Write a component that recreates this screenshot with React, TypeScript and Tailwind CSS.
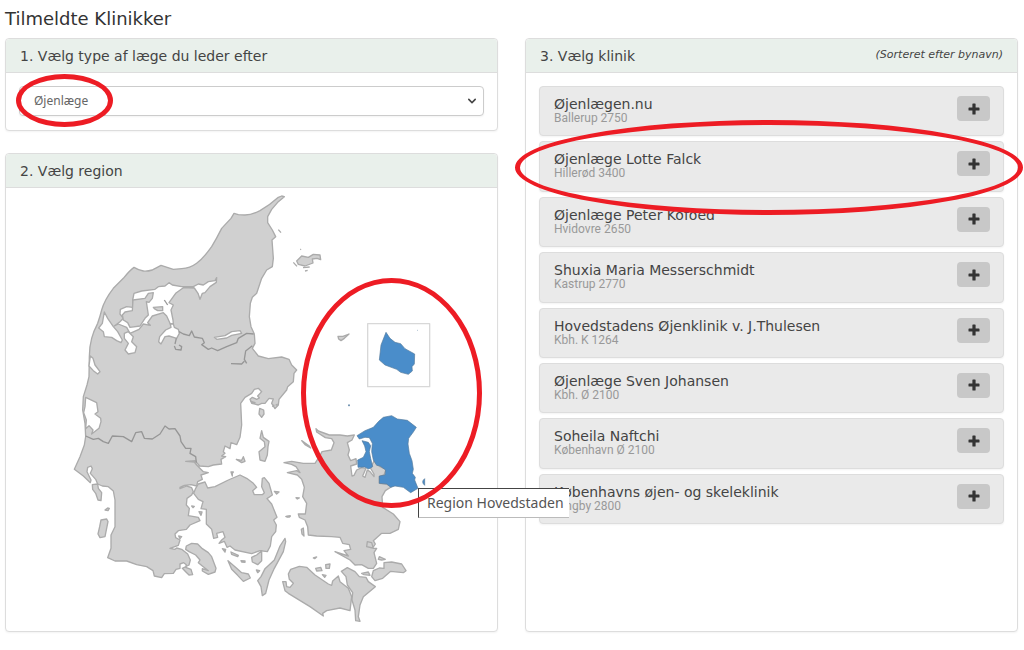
import type { ReactNode } from 'react';
import { HiChevronDown } from 'react-icons/hi';

const clinics = [
  { name: 'Øjenlægen.nu', city: 'Ballerup 2750' },
  { name: 'Øjenlæge Lotte Falck', city: 'Hillerød 3400', marked: true },
  { name: 'Øjenlæge Peter Kofoed', city: 'Hvidovre 2650' },
  { name: 'Shuxia Maria Messerschmidt', city: 'Kastrup 2770' },
  { name: 'Hovedstadens Øjenklinik v. J.Thulesen', city: 'Kbh. K 1264' },
  { name: 'Øjenlæge Sven Johansen', city: 'Kbh. Ø 2100' },
  { name: 'Soheila Naftchi', city: 'København Ø 2100' },
  { name: 'Københavns øjen- og skeleklinik', city: 'Lyngby 2800' },
];

const JUTLAND =
  'M658 20 L650 18 L640 22 Q615 45 585 62 Q560 75 540 75 L520 74 L507 70 L498 85 L470 115 Q455 145 440 170 Q415 205 395 220 Q375 235 350 236 L325 238 L288 226 Q270 235 262 240 Q245 245 235 243 Q220 240 207 232 Q195 240 175 265 L145 295 Q118 330 110 360 Q105 380 98 400 Q85 425 80 445 Q73 470 73 500 L72 560 L66 585 L55 620 L53 660 L60 700 L62 740 L58 765 L45 800 L28 838 L55 858 L76 878 L78 870 L66 845 L68 832 L78 828 L82 836 L76 850 L92 868 L98 882 L112 888 L130 890 L145 903 L150 930 L150 1010 L138 1035 L138 1075 L128 1103 L150 1113 L185 1113 L215 1124 L245 1130 L264 1142 L268 1158 L290 1163 L298 1151 L325 1150 L333 1138 L345 1135 L345 1122 L356 1118 L364 1124 L362 1132 L378 1138 L383 1154 L372 1155 L362 1145 L352 1135 L372 1125 L376 1110 L368 1092 L350 1078 L335 1074 L330 1078 L315 1075 L340 1066 L345 1050 L332 1043 L330 1032 L340 1022 L364 1018 L375 1005 L405 992 L400 982 L370 977 L373 955 L364 945 L366 925 L380 915 L385 905 L380 893 L365 888 L345 896 L345 892 L358 886 L378 884 L395 888 L398 875 L412 868 L408 855 L430 848 L415 845 L395 825 L388 816 L362 814 L390 812 L404 828 L430 830 L445 825 L470 822 L468 808 L482 800 L470 798 L480 790 L475 785 L480 768 L495 776 L498 758 L515 764 L525 742 L530 705 L527 640 L540 622 L560 610 L568 598 L580 595 L590 605 L578 618 L583 624 L575 628 L562 622 L555 628 L560 640 L580 645 L590 640 L600 640 L612 625 L625 627 L620 640 L630 656 L640 645 L642 628 L665 600 L668 590 L685 575 L687 550 L695 540 L680 525 L672 508 L650 501 L610 506 L580 498 L562 475 L570 460 L568 432 L558 410 L553 380 L556 340 L562 322 L575 310 L590 265 L605 240 L622 230 L625 205 L621 150 L632 140 L622 120 L608 98 L608 80 L620 58 L640 35 Z';

const FJORDS = [
  'M207 310 L230 303 L270 298 L280 290 L300 288 L312 278 L322 285 L350 290 L385 290 L400 282 L415 285 L430 275 L450 272 L455 263 L454 277 L435 290 L420 308 L412 310 L405 328 L399 310 L388 294 L355 293 L332 310 L312 338 L325 345 L318 360 L324 390 L325 402 L316 402 L305 378 L295 368 L262 378 L248 398 L256 406 L235 402 L222 418 L195 430 L185 412 L160 402 L148 408 L165 395 L175 385 L165 372 L166 358 L185 350 L203 352 L203 330 Z',
  'M118 366 L128 385 L145 410 L158 425 L172 450 L168 458 L155 452 L140 442 L118 440 L115 425 L101 414 L112 400 Z',
  'M178 430 L190 425 L205 440 L200 455 L215 470 L210 488 L190 492 L180 480 L190 460 L178 445 Z',
  'M316 402 L325 402 L328 412 L340 418 L343 430 L335 445 L312 438 L300 440 L288 462 L281 455 L284 440 L302 420 L318 412 Z',
  'M448 442 L480 437 L500 425 L525 422 L530 430 L500 436 L485 444 L455 448 Z',
  'M76 498 L84 505 L90 525 L105 545 L98 552 L85 542 L72 528 Z',
  'M62 622 L95 638 L99 665 L90 672 L107 685 L108 695 L102 715 L80 732 L84 720 L72 707 L62 716 L64 690 L56 668 L60 650 Z',
];

const LIMFJORD_ISLANDS = [
  'M265 308 L262 325 L252 337 L244 335 L250 375 L240 385 L225 408 L195 412 L188 398 L175 390 L172 375 L180 366 L202 362 L204 330 L240 325 L250 310 Z',
  'M265 352 L293 350 L293 362 L278 362 L268 356 Z',
];

const BORDERS = [
  'M342 425 L355 432 L373 437 L380 423 L388 441 L412 445 L418 458 L410 464 L430 478 L440 474 L458 482 L485 470 L515 458 L520 445 L545 430 L566 432',
  'M562 467 L542 483 L538 508 L545 520 M498 521 L530 522 L538 514',
  'M328 468 L332 478 L348 480 L350 470 L342 465 M334 445 L330 462',
  'M62 738 L85 748 L100 745 L115 755 L130 760 L142 738 L175 740 L200 755 L212 728 L230 725 L238 745 L262 747 L285 732 L300 708 L312 717 L330 716 L345 738 L348 755 L362 775 L378 775 L375 790 L392 800 L394 818',
  'M298 330 L308 345',
];

// islands around the Jutland coast and Funen
const WESTERN_ISLANDS = [
  'M82 74 L98 72 L100 85 L110 98 L108 122 L99 120 L92 100 L83 88 Z',
  'M108 180 L125 177 L129 185 L120 230 L105 233 L99 222 L104 200 Z',
  'M120 150 L128 144 L133 145 L129 152 Z',
  'M364 258 L380 250 L398 252 L412 266 L430 278 L440 290 L453 325 L450 336 L430 343 L412 333 L412 326 L430 332 L412 318 L400 308 L405 300 L392 285 L372 275 L362 268 Z',
  'M386 100 L392 85 L400 72 L420 66 L428 84 L450 80 L490 60 L525 45 L545 55 L565 70 L575 82 L563 92 L568 104 L592 104 L598 98 L590 80 L592 55 L598 53 L612 70 L622 105 L606 116 L620 132 L636 172 L626 180 L634 195 L632 215 L620 230 L616 258 L607 275 L585 272 L560 281 L510 270 L495 258 L486 262 L478 244 L462 250 L470 240 L480 232 L474 215 L455 220 L458 232 L446 235 L440 208 L424 192 L424 148 L408 146 L414 125 L400 118 Z',
  'M560 292 L575 285 L590 272 L590 302 L578 314 L562 306 Z',
  'M489 302 L515 325 L530 338 L550 342 L556 354 L535 364 L518 346 L500 328 Z',
  'M660 235 L662 245 L655 275 L628 325 L612 360 L602 400 L592 407 L588 380 L578 362 L588 350 L600 326 L628 300 L645 258 Z',
  'M590 -88 L595 -68 L612 -56 L609 -40 L607 -15 L600 4 L585 0 L582 -25 L600 -40 L598 -55 L585 -65 Z',
  'M514 -2 L530 1 L535 -10 L540 4 L530 8 Z',
  'M584 -155 L596 -150 L597 -138 L590 -128 L582 -138 Z',
  'M498 36 L505 36 L502 40 L502 48 Z',
  'M498 276 L520 286 L518 290 L500 283 Z',
  'M472 266 L482 268 L480 276 Z',
  'M528 302 L540 303 L540 307 L530 306 Z',
  'M628 94 L642 96 L635 102 Z',
  'M663 170 L676 168 L674 171 Z',
  'M402 155 L411 156 L408 166 Z',
  'M380 138 L388 139 L384 143 Z',
  'M574 330 L584 332 L578 338 Z',
  'M558 -176 L570 -172 L568 -170 Z',
  'M622 -160 L628 -166 M632 -164 L638 -168',
  'M341 228 L350 230 L345 236 Z',
];

const ZEALAND = [
  'M168 86 L175 93 L208 105 L240 105 L262 108 L283 105 L276 120 L262 128 L268 150 L264 165 L272 182 L288 176 L290 192 L272 198 L276 228 L282 226 L290 210 L305 203 L318 205 L308 228 L315 232 L322 210 L330 215 L342 230 L342 222 L332 205 L342 182 L360 200 L378 208 L372 225 L358 230 L358 250 L378 252 L398 258 L376 272 L366 290 L368 322 L400 342 L420 365 L415 388 L390 400 L365 400 L340 422 L346 432 L338 444 L320 440 L322 425 L335 428 L340 445 L350 445 L342 458 L350 490 L340 505 L325 505 L305 494 L285 495 L270 480 L225 455 L265 468 L252 452 L272 448 L268 434 L248 430 L240 412 L215 410 L170 408 L145 405 L143 380 L135 360 L118 352 L115 342 L136 342 L140 310 L128 290 L133 262 L125 238 L112 225 L82 218 L110 212 L120 218 L108 200 L95 193 L72 188 L95 184 L130 190 L165 190 L178 170 L186 155 L214 150 L222 128 L215 116 L196 113 L170 96 Z',
  'M85 522 L92 508 L118 499 L140 502 L165 525 L205 552 L215 556 L218 543 L235 528 L240 545 L265 565 L275 590 L270 632 L240 624 L200 632 L188 640 L190 648 L150 620 L85 580 L75 572 L68 545 L78 545 L80 560 L90 562 L100 550 L88 538 Z',
  'M244 514 L262 503 L285 515 L298 530 L318 532 L325 545 L346 560 L310 590 L300 615 L295 650 L300 664 L287 662 L285 630 L276 600 L278 578 L262 555 L258 530 Z',
  'M340 512 L358 504 L372 505 L372 488 L395 486 L425 492 L438 512 L430 518 L392 514 L368 535 L345 542 L335 530 Z',
  'M355 478 L358 470 L376 478 L365 480 Z',
  'M305 520 L325 516 L330 526 L312 524 Z',
  'M167 505 L182 502 L186 512 L170 513 Z',
  'M197 494 L210 492 L208 505 L198 505 Z',
  'M125 122 L148 138 L152 144 L135 134 Z',
  'M124 388 L130 384 L132 408 L126 402 Z',
  'M187 524 L198 526 L194 532 Z',
  'M108 293 L118 294 L112 297 Z',
  'M78 349 L90 348 L84 351 Z',
  'M160 474 L170 471 L164 476 Z',
];

const HOVEDSTADEN = [
  'M291 107 L315 92 L340 82 L356 64 L370 52 L395 47 L412 57 L442 61 L469 82 L460 96 L446 115 L444 132 L448 160 L456 182 L460 208 L457 220 L466 232 L464 240 L474 265 L452 278 L430 262 L405 258 L392 262 L380 252 L358 250 L358 228 L375 225 L377 210 L360 198 L350 196 L340 180 L335 155 L337 130 L328 113 L315 112 L298 117 Z',
  'M306 122 L325 127 L332 137 L328 155 L332 175 L338 200 L326 207 L314 201 L294 202 L293 180 L310 172 L318 155 L314 138 Z',
  'M494 236 Q482 245 494 256 Z',
  'M266 14 L268 14 L268 18 L266 18 Z',
];

function Panel({ title, aside, children }: { title: string; aside?: string; children: ReactNode }) {
  return (
    <section className="rounded border border-[#dddddd] bg-white shadow-xs">
      <header className="flex h-[34px] items-center justify-between rounded-t border-b border-[#dddddd] bg-[#e9f0eb] px-[14px]">
        <h2 className="text-sm">{title}</h2>
        {aside && <em className="text-[11px]">{aside}</em>}
      </header>
      {children}
    </section>
  );
}

function Marker({ className }: { className: string }) {
  return <div className={`pointer-events-none absolute z-20 rounded-[50%] border-5 border-[#ed1c24] ${className}`} />;
}

function PlusIcon() {
  return (
    <svg viewBox="0 0 12 12" className="h-3 w-3" fill="currentColor" aria-hidden="true">
      <path d="M5 0.5 H7 Q7.6 0.5 7.6 1.1 V4.4 H10.9 Q11.5 4.4 11.5 5 V7 Q11.5 7.6 10.9 7.6 H7.6 V10.9 Q7.6 11.5 7 11.5 H5 Q4.4 11.5 4.4 10.9 V7.6 H1.1 Q0.5 7.6 0.5 7 V5 Q0.5 4.4 1.1 4.4 H4.4 V1.1 Q4.4 0.5 5 0.5 Z" />
    </svg>
  );
}

function Shapes({ paths }: { paths: string[] }) {
  return <>{paths.map((d) => <path key={d} d={d} />)}</>;
}

function RegionMap() {
  return (
    <svg viewBox="-177 -6 1473 1329" className="block w-full" role="img" aria-label="Danmarkskort" strokeWidth="4" strokeLinejoin="round">
      <g fill="#d0d0d0" stroke="#ababab">
        <path d={JUTLAND} />
        <g fill="#ffffff"><Shapes paths={FJORDS} /></g>
        <Shapes paths={LIMFJORD_ISLANDS} />
        <g fill="none" stroke="#969696"><Shapes paths={BORDERS} /></g>
        <g transform="translate(0 810)"><Shapes paths={WESTERN_ISLANDS} /></g>
        <g transform="translate(585 630)"><Shapes paths={ZEALAND} /></g>
        <g transform="translate(630 105)">
          <path d="M65 108 L80 93 L100 97 L115 88 L135 90 L137 104 L126 100 L112 102 L114 114 L90 123 L70 118 Z" />
          <path d="M55 112 L66 124 M84 128 L104 126 M90 138 L98 136 M76 72 L78 74 M10 14 L18 23" />
          <path d="M189 334 L204 334 L222 327 L208 340 L198 347 L191 342 Z" />
        </g>
      </g>
      <rect x="908" y="401" width="186" height="189" fill="#ffffff" stroke="#d8d8d8" />
      <g fill="#4a8dca" stroke="#557a9c" strokeWidth="2">
        <g transform="translate(585 630)"><Shapes paths={HOVEDSTADEN} /></g>
        <g transform="translate(675 240)">
          <path d="M288 187 L300 205 L315 217 L332 221 L345 236 L374 252 L373 282 L366 290 L367 303 L355 313 L332 307 L320 298 L285 285 L268 270 L273 225 Z" />
          <path d="M381 181 L383 181" />
        </g>
      </g>
    </svg>
  );
}

export default function App() {
  return (
    <main className="pr-[6px] pl-[5px] pb-4 font-['DejaVu_Sans',Verdana,sans-serif] text-[#444444]">
      <h1 className="flex h-[38px] items-center text-lg text-[#333333]">Tilmeldte Klinikker</h1>

      <div className="grid grid-cols-2 gap-[27px]">
        <div className="flex flex-col gap-[22px]">
          <Panel title="1. Vælg type af læge du leder efter">
            <div className="px-[13px] pt-[13px] pb-[14px]">
              <div className="relative">
                <select
                  aria-label="Vælg type af læge"
                  className="block h-[30px] w-full appearance-none rounded border border-[#cccccc] bg-white px-[14px] font-['Noto_Sans',sans-serif] text-xs text-[#666666] shadow-xs"
                >
                  <option>Øjenlæge</option>
                </select>
                <HiChevronDown className="pointer-events-none absolute top-[7px] right-1 h-4 w-4 text-[#444444]" />
                <Marker className="-top-3 -left-[3px] h-[53px] w-[97px]" />
              </div>
            </div>
          </Panel>

          <Panel title="2. Vælg region">
            <div className="relative">
              <RegionMap />
              <div role="tooltip" className="absolute top-[300px] left-[412px] z-10 flex h-[30px] w-[151px] items-center border-t border-b border-l border-t-[#444444] border-b-[#bbbbbb] border-l-[#444444] bg-white pl-2 font-['Noto_Sans',sans-serif] text-sm whitespace-nowrap text-[#555555]">
                Region Hovedstaden
              </div>
              <Marker className="top-[90px] left-[295px] h-[230px] w-[181px]" />
            </div>
          </Panel>
        </div>

        <Panel title="3. Vælg klinik" aside="(Sorteret efter bynavn)">
          <ul className="m-[13px] grid h-[438px] auto-rows-fr gap-[5px]">
            {clinics.map((clinic) => (
              <li key={clinic.name} className="relative flex items-start justify-between rounded border border-[#dddddd] bg-[#eaeaea] pt-[9px] pr-[13px] pl-[14px] shadow-xs">
                <div>
                  <h3 className="text-sm leading-4">{clinic.name}</h3>
                  <p className="font-[Roboto,sans-serif] text-xs leading-3 text-[#999999]">{clinic.city}</p>
                </div>
                <button type="button" aria-label={`Vis ${clinic.name}`} className="flex h-[25px] w-[33px] items-center justify-center rounded bg-[#c8c8c8] text-[#333333]">
                  <PlusIcon />
                </button>
                {clinic.marked && <Marker className="-top-[22px] -right-5 -left-[25px] h-[95px]" />}
              </li>
            ))}
          </ul>
        </Panel>
      </div>
    </main>
  );
}
